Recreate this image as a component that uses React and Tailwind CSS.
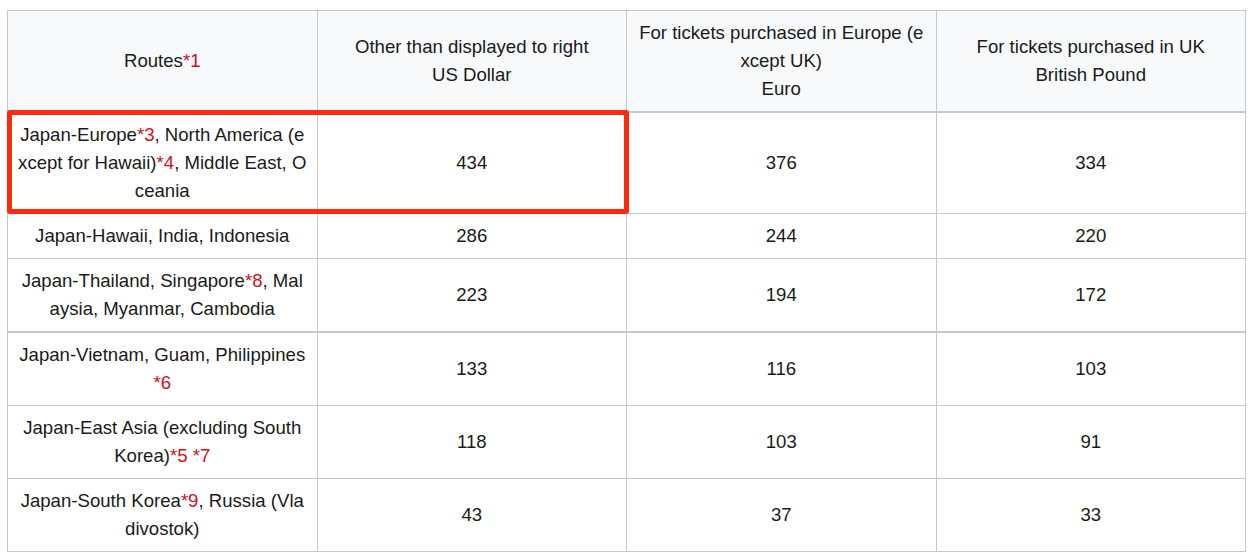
import React from "react";

const cols = [
  { id: "usd", lines: ["Other than displayed to right", "US Dollar"] },
  { id: "eur", lines: ["For tickets purchased in Europe (e", "xcept UK)", "Euro"] },
  { id: "gbp", lines: ["For tickets purchased in UK", "British Pound"] },
];

// each route is a list of lines; odd parts within a line are the red notes
const rows = [
  {
    route: [
      ["Japan-Europe", "*3", ", North America (e"],
      ["xcept for Hawaii)", "*4", ", Middle East, O"],
      ["ceania"],
    ],
    usd: 434, eur: 376, gbp: 334,
  },
  { route: [["Japan-Hawaii, India, Indonesia"]], usd: 286, eur: 244, gbp: 220 },
  {
    route: [["Japan-Thailand, Singapore", "*8", ", Mal"], ["aysia, Myanmar, Cambodia"]],
    usd: 223, eur: 194, gbp: 172,
  },
  { route: [["Japan-Vietnam, Guam, Philippines"], ["", "*6"]], usd: 133, eur: 116, gbp: 103 },
  {
    route: [["Japan-East Asia (excluding South"], ["Korea)", "*5 *7"]],
    usd: 118, eur: 103, gbp: 91,
  },
  {
    route: [["Japan-South Korea", "*9", ", Russia (Vla"], ["divostok)"]],
    usd: 43, eur: 37, gbp: 33,
  },
];

function Route({ lines }) {
  return lines.map((parts, li) => (
    <div key={li} className="whitespace-nowrap">
      {parts.map((p, i) =>
        i % 2 === 1 ? (
          <span key={i} className="text-[#d0101b]">{p}</span>
        ) : (
          <span key={i}>{p}</span>
        )
      )}
    </div>
  ));
}

export default function App() {
  return (
    <div className="bg-white min-h-[558px] pl-[7px] pt-[10px] font-['Liberation_Sans',Arial,sans-serif] text-[18.6px] leading-[28px] text-[#1a1a1a]">
      <div className="relative w-[1239px]">
        <table className="w-full table-fixed border-collapse">
          <thead>
            <tr className="bg-[#f8f9fb] h-[100px]">
              <th className="border border-[#c8c8c8] border-b-2 font-normal px-2 py-2">
                Routes<span className="text-[#d0101b]">*1</span>
              </th>
              {cols.map(c => (
                <th key={c.id} className="border border-[#c8c8c8] border-b-2 font-normal px-2 py-2">
                  {c.lines.map((l, i) => (
                    <div key={i} className="whitespace-nowrap">{l}</div>
                  ))}
                </th>
              ))}
            </tr>
          </thead>
          <tbody>
            {rows.map((r, i) => (
              <tr key={i} className={i === 2 ? "border-b-2 border-[#c8c8c8]" : ""}>
                <td className="border border-[#c8c8c8] px-2 py-2 text-center">
                  <Route lines={r.route} />
                </td>
                <td className="border border-[#c8c8c8] px-2 py-2 text-center">{r.usd}</td>
                <td className="border border-[#c8c8c8] px-2 py-2 text-center">{r.eur}</td>
                <td className="border border-[#c8c8c8] px-2 py-2 text-center">{r.gbp}</td>
              </tr>
            ))}
          </tbody>
        </table>

        {/* highlight annotation */}
        <div className="absolute left-0 top-[100px] w-[622px] h-[104px] border-[5px] border-[#fc2a0f] rounded-[3px] pointer-events-none" />
      </div>
    </div>
  );
}
